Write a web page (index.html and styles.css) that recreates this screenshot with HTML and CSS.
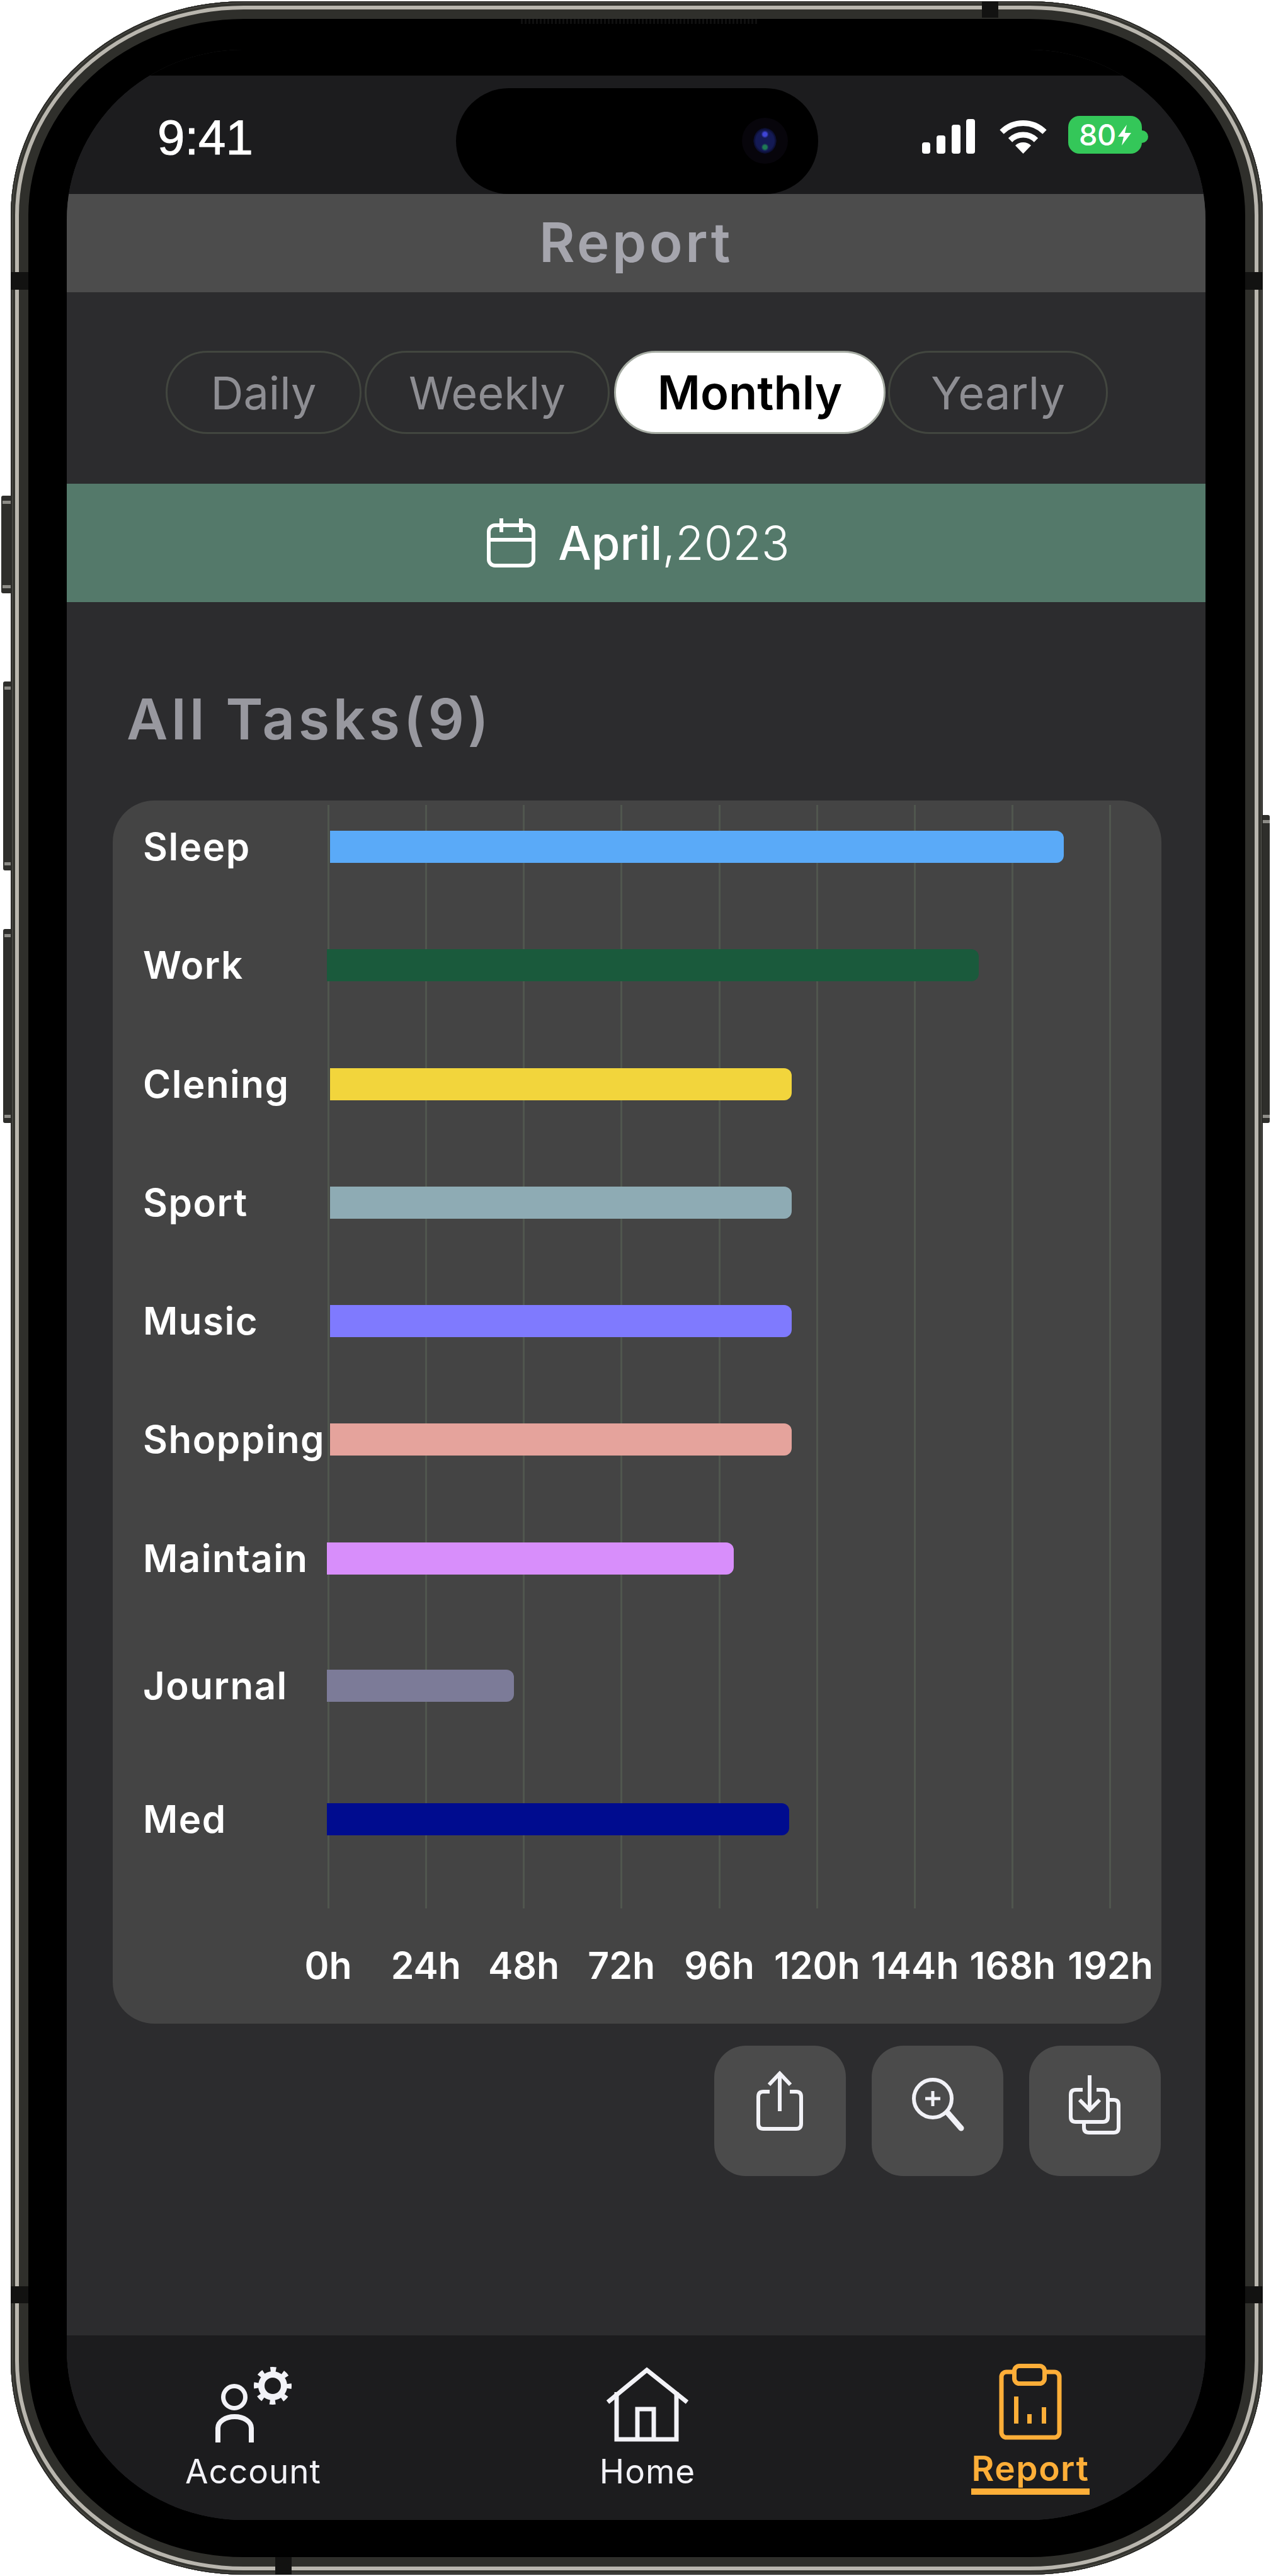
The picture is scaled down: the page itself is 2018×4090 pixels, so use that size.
FILE: index.html
```html
<!DOCTYPE html>
<html lang="en">
<head>
<meta charset="utf-8">
<title>Report</title>
<link rel="stylesheet" href="styles.css">
</head>
<body>
<div class="page">
  <span class="side side-mute"></span>
  <span class="side side-up"></span>
  <span class="side side-down"></span>
  <span class="side side-power"></span>
  <div class="phone">
    <span class="band band-lt"></span>
    <span class="band band-lb"></span>
    <span class="band band-rt"></span>
    <span class="band band-rb"></span>
    <span class="band band-top"></span>
    <span class="band band-bottom"></span>
    <span class="speaker"></span>
    <div class="screen">
      <div class="bezel-strip"></div>
      <div class="status">
        <span class="time">9:41</span>
        <div class="island"><span class="camera"></span></div>
        <svg class="signal" width="84" height="55" viewBox="0 0 84 55">
          <rect x="0" y="37" width="13" height="18" rx="4"/>
          <rect x="23" y="26" width="14" height="29" rx="4"/>
          <rect x="47" y="9" width="14" height="46" rx="4"/>
          <rect x="70" y="0" width="14" height="55" rx="4"/>
        </svg>
        <svg class="wifi" width="79" height="55" viewBox="0 0 79 55">
          <path class="wifi-arc" d="M5.5 20.5A48 48 0 0 1 73.5 20.5"/>
          <path class="wifi-arc" d="M19 33.5A29 29 0 0 1 60 33.5"/>
          <path class="wifi-dot" d="M39.5 55L27 42A18 18 0 0 1 52 42Z"/>
        </svg>
        <div class="battery">
          <span class="battery-text">80</span>
          <svg class="bolt" width="21" height="33" viewBox="0 0 21 33"><path d="M14 0L0 19H9L6 33L21 13H11Z"/></svg>
        </div>
      </div>
      <header class="title-bar">Report</header>
      <main class="content">
        <nav class="periods">
          <span class="pill pill-daily">Daily</span>
          <span class="pill pill-weekly">Weekly</span>
          <span class="pill pill-monthly">Monthly</span>
          <span class="pill pill-yearly">Yearly</span>
        </nav>
        <div class="date-band">
          <svg class="calendar" width="77" height="78" viewBox="0 0 77 78">
            <rect x="3" y="11" width="71" height="64" rx="10"/>
            <path d="M3 34H74M23 0V22M54 0V22"/>
          </svg>
          <span class="date-text"><span class="date-month">April</span>,2023</span>
        </div>
        <h1 class="all-tasks">All Tasks(9)</h1>
        <section class="card">
          <div class="gridlines">
            <span></span><span></span><span></span><span></span><span></span><span></span><span></span><span></span><span></span>
          </div>
          <div class="rows">
            <div class="row"><span class="label">Sleep</span><span class="bar inset" style="width:1165px;background:#5aaaf8"></span></div>
            <div class="row"><span class="label">Work</span><span class="bar" style="width:1035px;background:#1a5a3c"></span></div>
            <div class="row"><span class="label">Clening</span><span class="bar inset" style="width:733px;background:#f2d53c"></span></div>
            <div class="row"><span class="label">Sport</span><span class="bar inset" style="width:733px;background:#8eabb4"></span></div>
            <div class="row"><span class="label">Music</span><span class="bar inset" style="width:733px;background:#7f7afe"></span></div>
            <div class="row"><span class="label">Shopping</span><span class="bar inset" style="width:733px;background:#e5a39c"></span></div>
            <div class="row"><span class="label">Maintain</span><span class="bar" style="width:646px;background:#d88efb"></span></div>
            <div class="row row-journal"><span class="label">Journal</span><span class="bar" style="width:297px;background:#7c7b98"></span></div>
            <div class="row row-med"><span class="label">Med</span><span class="bar" style="width:734px;background:#000c8f"></span></div>
          </div>
          <div class="axis">
            <span class="tick">0h</span><span class="tick">24h</span><span class="tick">48h</span><span class="tick">72h</span><span class="tick">96h</span><span class="tick">120h</span><span class="tick">144h</span><span class="tick">168h</span><span class="tick">192h</span>
          </div>
        </section>
        <div class="actions">
          <button class="action">
            <svg class="action-icon" width="209" height="207" viewBox="0 0 209 207">
              <path d="M88 73H78Q70 73 70 81V124Q70 132 78 132H130Q138 132 138 124V81Q138 73 130 73H120"/>
              <path d="M104 104V44M87 62L104 44L121 62"/>
            </svg>
          </button>
          <button class="action">
            <svg class="action-icon" width="209" height="207" viewBox="0 0 209 207">
              <circle cx="97" cy="84" r="30"/>
              <path class="thin" d="M97 72V96M85 84H109"/>
              <path class="thick" d="M121 107L142 131"/>
            </svg>
          </button>
          <button class="action">
            <svg class="action-icon" width="209" height="207" viewBox="0 0 209 207">
              <path d="M85 70H74Q66 70 66 78V113Q66 121 74 121H117Q125 121 125 113V78Q125 70 117 70H107"/>
              <path d="M126 86H134Q142 86 142 94V130Q142 138 134 138H95Q87 138 87 130V122"/>
              <path d="M96 47V100M80 86L96 102L112 86"/>
            </svg>
          </button>
        </div>
      </main>
      <footer class="tabs">
        <div class="tab">
          <svg class="tab-icon" width="200" height="130" viewBox="0 0 200 130">
            <circle cx="70" cy="58" r="17.5"/>
            <path class="person" d="M44 130V107A26.5 18 0 0 1 97 107V130"/>
            <circle class="gear" cx="131" cy="40" r="18"/>
            <circle class="teeth" cx="131" cy="40" r="26"/>
          </svg>
          <span class="tab-label">Account</span>
        </div>
        <div class="tab">
          <svg class="tab-icon" width="140" height="130" viewBox="0 0 140 130">
            <path d="M7 66L69 15L133 66"/>
            <path d="M21 50V125H116V50"/>
            <path d="M54 125V77H80V125"/>
          </svg>
          <span class="tab-label">Home</span>
        </div>
        <div class="tab tab-active">
          <svg class="tab-icon" width="110" height="130" viewBox="0 0 110 130">
            <rect class="clip-body" x="9" y="18" width="92" height="104" rx="8"/>
            <rect class="clip-top" x="29.5" y="8.500" width="48" height="28" rx="8"/>
            <path d="M32.500 57V100M53.500 85V100M76.500 74V100"/>
          </svg>
          <span class="tab-label">Report</span>
        </div>
      </footer>
    </div>
  </div>
</div>
</body>
</html>
```
FILE: styles.css
```css
* { box-sizing: border-box; }
html, body { margin: 0; padding: 0; background: #fff; }
body { font-family: Inter, "Liberation Sans", sans-serif; }

.page { position: relative; width: 2018px; height: 4090px; overflow: hidden; padding: 2px 13px 2px 17px; }

.side { position: absolute; background: #2e2e2b; border-radius: 3px 0 0 3px; }
.side::before, .side::after { content: ""; position: absolute; left: 2px; right: 0; height: 5px; background: #8d8c87; }
.side::before { top: 8px; }
.side::after { bottom: 8px; }
.side-mute { left: 2px; top: 787px; width: 18px; height: 155px; }
.side-up { left: 5px; top: 1082px; width: 15px; height: 300px; }
.side-down { left: 5px; top: 1475px; width: 15px; height: 308px; }
.side-power { left: 2000px; top: 1294px; width: 16px; height: 489px; border-radius: 0 3px 3px 0; }

.phone {
  position: relative;
  width: 1988px;
  height: 4086px;
  padding: 77px 91px 87px 89px;
  background: #000;
  border-radius: 370px / 340px;
  box-shadow:
    inset 0 0 0 2px #2a2a27,
    inset 0 0 0 3px #55544f,
    inset 0 0 0 7px #34342f,
    inset 0 0 0 13px #b9b6ae,
    inset 0 0 0 28px #2f2f2b;
}

.band { position: absolute; background: #121211; }
.band-lt { left: 0; top: 430px; width: 28px; height: 28px; }
.band-lb { left: 0; top: 3628px; width: 28px; height: 27px; }
.band-rt { right: 0; top: 430px; width: 28px; height: 28px; }
.band-rb { right: 0; top: 3628px; width: 28px; height: 27px; }
.band-top { left: 1542px; top: 0; width: 26px; height: 26px; }
.band-bottom { left: 420px; bottom: 0; width: 26px; height: 28px; }

.speaker {
  position: absolute;
  left: 810px;
  top: 28px;
  width: 375px;
  height: 8px;
  background: repeating-linear-gradient(90deg, #101010 0 3px, #000 3px 6px);
}

.screen {
  position: relative;
  display: flex;
  flex-direction: column;
  width: 1808px;
  height: 3922px;
  background: #2c2c2e;
  border-radius: 280px / 270px;
  overflow: hidden;
}

.bezel-strip { flex: none; height: 41px; background: #000; }

.status { flex: none; display: flex; align-items: flex-start; height: 188px; padding-left: 144px; background: #1c1c1e; }
.time { flex: none; width: 474px; margin-top: 62px; font-family: "Liberation Sans", sans-serif; font-size: 78px; line-height: 72px; color: #fff; -webkit-text-stroke: 1px #fff; }
.island { position: relative; flex: none; width: 575px; height: 168px; margin-top: 20px; background: #000; border-radius: 84px / 84px; }
.camera {
  position: absolute;
  left: 454px;
  top: 47px;
  width: 73px;
  height: 73px;
  border-radius: 50%;
  background:
    radial-gradient(circle at 50% 36%, #3f45d8 0 3px, transparent 6px),
    radial-gradient(circle at 50% 64%, #1f7a55 0 3px, transparent 6px),
    radial-gradient(ellipse 18px 20px at 50% 50%, #141a55 0 80%, #0a0c2a 100%, transparent 102%),
    #07050b;
}
.signal { flex: none; margin: 69px 0 0 165px; fill: #fff; }
.wifi { flex: none; margin: 69px 0 0 37px; }
.wifi-arc { fill: none; stroke: #fff; stroke-width: 9; }
.wifi-dot { fill: #fff; }
.battery {
  position: relative;
  flex: none;
  display: flex;
  align-items: center;
  justify-content: center;
  gap: 3px;
  width: 117px;
  height: 60px;
  margin: 64px 0 0 32px;
  background: #34c759;
  border-radius: 18px;
}
.battery::after {
  content: "";
  position: absolute;
  left: 117px;
  top: 23px;
  width: 10px;
  height: 20px;
  background: #34c759;
  border-radius: 0 10px 10px 0;
}
.battery-text { font-size: 47px; font-weight: 500; line-height: 60px; color: #fff; letter-spacing: -0.5px; }
.bolt { fill: #fff; flex: none; }

.title-bar {
  flex: none;
  height: 156px;
  background: #4c4c4c;
  color: #a5a5ad;
  font-size: 87px;
  font-weight: 600;
  line-height: 154px;
  letter-spacing: 4.5px;
  text-align: center;
}

.content { flex: 1; display: flex; flex-direction: column; min-height: 0; }

.periods { display: flex; gap: 5px; height: 132px; margin-top: 93px; padding-left: 157px; }
.pill {
  display: flex;
  align-items: center;
  justify-content: center;
  height: 132px;
  border: 3px solid #42463f;
  border-radius: 66px;
  color: #8e8e93;
  font-size: 72px;
  font-weight: 400;
}
.pill-daily { width: 311px; }
.pill-weekly { width: 389px; }
.pill-monthly { width: 431px; margin: 0 -1px 0 2px; background: #fff; border-color: #a6aca3; color: #000; font-size: 74px; font-weight: 600; }
.pill-yearly { width: 349px; }

.date-band {
  display: flex;
  align-items: center;
  justify-content: center;
  gap: 36px;
  height: 188px;
  margin-top: 79px;
  padding-left: 7px;
  background: #54796a;
}
.calendar { flex: none; fill: none; stroke: #fff; stroke-width: 6; }
.date-text { font-size: 74px; font-weight: 300; line-height: 80px; color: #fff; }
.date-month { font-weight: 500; }

.all-tasks {
  margin: 136px 0 0;
  padding-left: 95px;
  height: 100px;
  font-size: 90px;
  font-weight: 600;
  line-height: 100px;
  letter-spacing: 5.5px;
  color: #98989f;
}

.card {
  position: relative;
  width: 1665px;
  height: 1942px;
  margin: 79px 0 0 73px;
  padding: 48px 0 0 48px;
  background: #444;
  border-radius: 66px;
}
.gridlines {
  position: absolute;
  left: 341px;
  top: 7px;
  width: 1244px;
  height: 1752px;
  display: flex;
  justify-content: space-between;
}
.gridlines span { width: 3px; background: #50564e; }

.rows { position: relative; display: flex; flex-direction: column; gap: 137.3px; }
.row { display: flex; align-items: center; height: 51px; }
.row-journal { margin-top: 14px; }
.row-med { margin-top: 24px; }
.label { flex: none; width: 292px; font-size: 60px; font-weight: 600; line-height: 51px; letter-spacing: 1.5px; color: #fff; white-space: nowrap; }
.bar { height: 51px; border-radius: 0 12px 12px 0; }
.bar.inset { margin-left: 5px; }

.axis { position: relative; display: flex; justify-content: space-between; width: 1244px; margin: 177px 0 0 293px; }
.tick { display: flex; justify-content: center; width: 2px; font-size: 59px; font-weight: 600; line-height: 60px; color: #fff; white-space: nowrap; }

.actions { display: flex; justify-content: flex-end; gap: 41px; margin-top: 35px; padding-right: 71px; }
.action { flex: none; width: 209px; height: 207px; padding: 0; border: 0; background: #4b4b4b; border-radius: 50px; }
.action-icon { display: block; fill: none; stroke: #f2f2f7; stroke-width: 6; }
.action-icon .thin { stroke-width: 5; }
.action-icon .thick { stroke-width: 9; stroke-linecap: round; }

.tabs {
  flex: none;
  display: grid;
  grid-template-columns: 592px 660px 556px;
  height: 293px;
  padding-top: 40px;
  background: #1c1c1e;
}
.tab { display: flex; flex-direction: column; align-items: center; }
.tab-icon { display: block; flex: none; fill: none; stroke: #f2f2f7; stroke-width: 7; }
.tab-icon .person { stroke-width: 8; }
.tab-icon .gear { stroke-width: 10; }
.tab-icon .teeth { stroke-width: 8; stroke-dasharray: 9 11.42; stroke-dashoffset: 4.5; }
.tab-label { margin-top: 16px; font-size: 53px; font-weight: 400; line-height: 60px; letter-spacing: 1px; color: #f2f2f7; }
.tab-active .tab-icon { stroke: #fdae38; }
.tab-active .clip-top { fill: #1c1c1e; }
.tab-active .tab-label { margin-top: 11px; padding: 0 1px 2px; border-bottom: 10px solid #fdae38; font-size: 55px; font-weight: 600; letter-spacing: 1.5px; color: #fdae38; }
```
